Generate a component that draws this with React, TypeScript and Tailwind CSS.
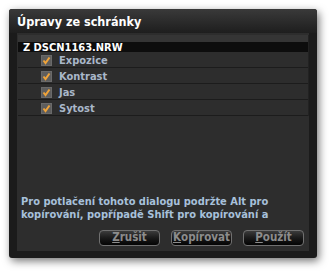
import React from "react";

function Check() {
  return (
    <span className="w-[11px] h-[11px] bg-[#5e5e5e] border border-[#6a6a6a] flex items-center justify-center">
      <svg width="9" height="9" viewBox="0 0 9 9">
        <path d="M1.5 4.5 L3.5 7 L7.5 1.5" stroke="#f0a43a" strokeWidth="2" fill="none" />
      </svg>
    </span>
  );
}

function Btn({ first, rest }: { first: string; rest: string }) {
  return (
    <div className="w-[61px] h-[16px] rounded-[4px] border border-[#707070] bg-gradient-to-b from-[#3c3c3c] via-[#1a1a1a] to-[#050505] flex items-center justify-center text-[#8c8c8c] text-[11.5px] font-bold leading-none">
      <span className="underline underline-offset-1">{first}</span>
      <span>{rest}</span>
    </div>
  );
}

export default function App() {
  const items = ["Expozice", "Kontrast", "Jas", "Sytost"];
  return (
    <div
      className="w-[331px] h-[273px] bg-white pt-[9px] pl-[9px]"
      style={{ fontFamily: "'DejaVu Sans Condensed', 'DejaVu Sans', sans-serif" }}
    >
      <div className="w-[308px] h-[249px] bg-[#1b1b1b] rounded-[3px] shadow-[2px_3px_8px_rgba(0,0,0,0.55)] flex flex-col">
        <div className="h-[24px] rounded-t-[3px] bg-gradient-to-b from-[#3a3a3a] to-[#1e1e1e] flex items-center pl-[8px] pt-[2px] text-white font-bold text-[12.5px] leading-none">
          Úpravy ze schránky
        </div>
        <div className="flex-1 mx-[8px] mb-[7px] bg-[#2d2d2d] flex flex-col">
          <div className="mt-[2px] ml-[1px] border-r border-[#222]">
            <div className="h-[7px] bg-[#353535]" />
            <div className="h-[10px] bg-[#0d0d0d] flex items-center pl-[5px] text-white font-bold text-[11px] leading-none">
              Z DSCN1163.NRW
            </div>
            {items.map((t) => (
              <div key={t} className="h-[16px] border-b border-[#1c1c1c] flex items-center pl-[23px] pt-[1px] gap-[7px]">
                <Check />
                <span className="text-[#a9b7c9] font-bold text-[11px] leading-none">{t}</span>
              </div>
            ))}
          </div>
          <div className="flex-1" />
          <div className="pl-[4px] text-[#a7c0da] font-bold text-[11px] leading-[13px] whitespace-nowrap overflow-hidden">
            <div>Pro potlačení tohoto dialogu podržte Alt pro</div>
            <div>kopírování, popřípadě Shift pro kopírování a</div>
          </div>
          <div className="flex justify-end gap-[11px] pr-[5px] mt-[9px] mb-[5px]">
            <Btn first="Z" rest="rušit" />
            <Btn first="K" rest="opírovat" />
            <Btn first="P" rest="oužít" />
          </div>
        </div>
      </div>
    </div>
  );
}
